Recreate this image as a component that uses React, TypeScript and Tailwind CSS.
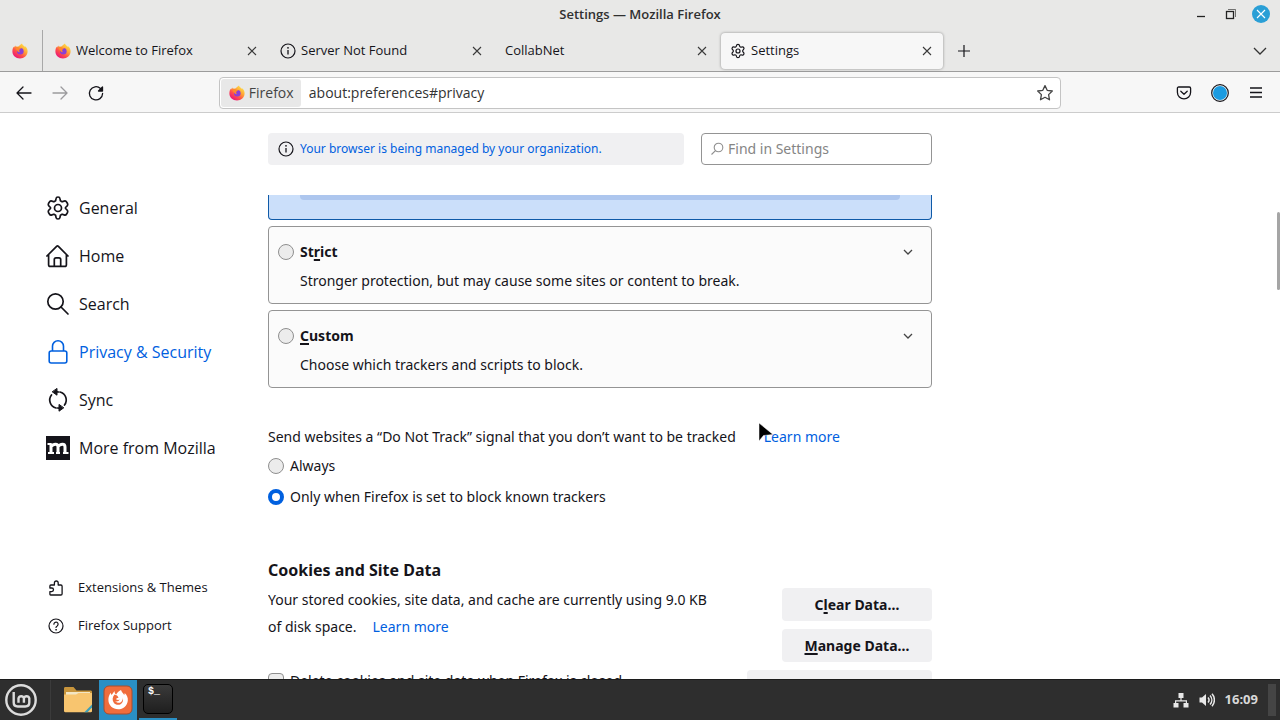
import type { ReactNode } from "react";
import { Settings } from "lucide-react";

function FirefoxLogo() {
  return (
    <svg viewBox="0 0 16 16" className="size-4 shrink-0">
      <defs>
        <linearGradient id="fx-flame" x1="0.85" y1="0.1" x2="0.2" y2="0.95">
          <stop offset="0" stopColor="#ffe14a" />
          <stop offset="0.35" stopColor="#ffa436" />
          <stop offset="0.65" stopColor="#ff4f4a" />
          <stop offset="1" stopColor="#e8127c" />
        </linearGradient>
      </defs>
      <path
        d="M10 .6c.3 1 .9 1.5 1.700 2.200.5.400.9.800 1.200 1.300.2-.3.200-.6.200-.8 1.600 1.300 2.600 3.200 2.500 5.300-.1 4-3.400 7-7.600 7S.4 12.500.4 8.600c0-1.700.3-3.500 1.300-4.900.1.400.2.700.3.900.3-.9.800-1.600 1.500-2.200 0 .5.100 1 .3 1.300.7-.2 1.500-.2 2.200.1C7 3 8.600 1.500 10 .6z"
        fill="url(#fx-flame)"
      />
      <circle cx="8.300" cy="8.300" r="3.300" fill="#8a3fd6" />
      <path d="M3.800 4.200c1.400-.5 2.800-.2 3.600.6.8.1 1.400.3 1.800.8-1 .2-1.600.7-1.900 1.400-.3.800 0 1.700.8 2.100-1.700.3-2.900-.6-3-1.800C4 6.600 3.600 5.300 3.800 4.200z" fill="#ff8a2b" />
    </svg>
  );
}

function InfoIcon() {
  return (
    <svg viewBox="0 0 16 16" className="size-4 shrink-0" fill="none" stroke="currentColor">
      <circle cx="8" cy="8" r="7" strokeWidth="1.200" />
      <path d="M8 7v4.600" strokeWidth="1.300" />
      <circle cx="8" cy="4.800" r="0.900" fill="currentColor" stroke="none" />
    </svg>
  );
}

function CloseIcon() {
  return (
    <svg viewBox="0 0 10 10" className="size-[10px]" fill="none" stroke="currentColor" strokeWidth="1.100">
      <path d="M1 1l8 8M9 1L1 9" />
    </svg>
  );
}

function Tab({ title, icon, active }: { title: string; icon?: ReactNode; active?: boolean }) {
  return (
    <div
      className={
        active
          ? "flex h-9 w-[222px] items-center gap-[5px] rounded bg-[#f7f7f7] pl-[9px] pr-[7px] shadow-[0_0_3px_rgba(0,0,0,0.4)]"
          : "flex h-9 w-[222px] items-center gap-[5px] rounded pl-[9px] pr-[7px]"
      }
    >
      {icon}
      <span className="flex-1 truncate text-[13px]">{title}</span>
      <button aria-label={`Close ${title}`} className="grid size-[18px] place-items-center text-[#3a3a3a]">
        <CloseIcon />
      </button>
    </div>
  );
}

function TitleBar() {
  return (
    <header className="grid h-7 shrink-0 grid-cols-[1fr_auto_1fr] items-center pr-[10px]">
      <span />
      <h1 className="pl-[10px] pt-[2px] text-[13px] font-semibold text-[#303030]">Settings — Mozilla Firefox</h1>
      <div className="flex items-center justify-end gap-3">
        <button aria-label="Minimize" className="grid size-[18px] place-items-center">
          <svg viewBox="0 0 18 18" className="size-[18px]" stroke="#222" strokeWidth="1.300">
            <path d="M5 11.500h8" />
          </svg>
        </button>
        <button aria-label="Restore" className="grid size-[18px] place-items-center">
          <svg viewBox="0 0 18 18" className="size-[18px]" fill="none" stroke="#222">
            <rect x="4.500" y="6.500" width="7" height="7" strokeWidth="1.300" />
            <path d="M6 4.500h7.500V12" strokeWidth="0.600" />
          </svg>
        </button>
        <button aria-label="Close window" className="grid size-[18px] place-items-center rounded-full bg-[#2a9fd6] text-white">
          <CloseIcon />
        </button>
      </div>
    </header>
  );
}

function TabStrip() {
  return (
    <div className="flex h-11 shrink-0 items-center border-b border-[#9c9c9c] pt-[2px]">
      <button aria-label="Firefox View" className="grid h-full w-[43px] place-items-center border-r border-[#a8a8a8] pr-[3px]">
        <FirefoxLogo />
      </button>
      <div className="flex gap-[3px] pl-[3px]">
        <Tab title="Welcome to Firefox" icon={<FirefoxLogo />} />
        <Tab title="Server Not Found" icon={<InfoIcon />} />
        <Tab title="CollabNet" />
        <Tab title="Settings" icon={<Settings className="size-4 shrink-0" strokeWidth={1.8} />} active />
      </div>
      <button aria-label="New tab" className="ml-3 grid size-[18px] place-items-center">
        <svg viewBox="0 0 12 12" className="size-3" stroke="currentColor" strokeWidth="1.200">
          <path d="M6 0v12M0 6h12" />
        </svg>
      </button>
      <button aria-label="List all tabs" className="ml-auto mr-3 grid h-4 w-4 place-items-center">
        <svg viewBox="0 0 14 8" className="h-2 w-[14px]" fill="none" stroke="#333" strokeWidth="1.300">
          <path d="M1 1l6 6 6-6" />
        </svg>
      </button>
    </div>
  );
}

function ToolButton({ label, dim, children }: { label: string; dim?: boolean; children: ReactNode }) {
  return (
    <button aria-label={label} className={dim ? "grid size-9 place-items-center opacity-40" : "grid size-9 place-items-center"}>
      <svg viewBox="0 0 18 18" className="size-[18px]" fill="none" stroke="currentColor" strokeWidth="1.300" strokeLinecap="round" strokeLinejoin="round">
        {children}
      </svg>
    </button>
  );
}

function NavBar() {
  return (
    <div className="flex h-[41px] shrink-0 items-center border-b border-[#ccc] bg-[#f7f7f7] px-[6px] pt-px">
      <ToolButton label="Back">
        <path d="M16 9H2.500M8 3L2 9l6 6" />
      </ToolButton>
      <ToolButton label="Forward" dim>
        <path d="M2 9h13.500M10 3l6 6-6 6" />
      </ToolButton>
      <ToolButton label="Reload">
        <path d="M15.600 9.500A6.600 6.600 0 1 1 13.500 4.500" />
        <path d="M15.500 3v4h-4z" fill="currentColor" />
      </ToolButton>
      <span className="flex-1" />
      <div className="flex h-8 flex-[8] items-center rounded border border-[#c4c4c4] bg-white p-px">
        <button className="flex h-full w-20 items-center gap-1 rounded-[3px] bg-[#e8e8e8] pl-2 text-sm text-[#444]">
          <FirefoxLogo />
          Firefox
        </button>
        <input
          aria-label="Address"
          defaultValue="about:preferences#privacy"
          className="min-w-0 flex-1 bg-transparent pl-2 text-sm text-[#333] outline-none"
        />
        <button aria-label="Bookmark this page" className="mr-[5px]">
          <svg viewBox="0 0 18 18" className="size-[18px]" fill="none" stroke="#444" strokeWidth="1.300" strokeLinejoin="round">
            <path d="M9 1.600l2.200 4.700 5.100.7-3.700 3.600.9 5.200L9 13.300l-4.500 2.500.9-5.200L1.700 7l5.100-.7z" />
          </svg>
        </button>
      </div>
      <span className="flex-1" />
      <ToolButton label="Save to Pocket">
        <path d="M3.700 3h10.600c.8 0 1.300.5 1.300 1.300v4a6.600 6.600 0 0 1-13.200 0v-4C2.400 3.500 2.900 3 3.700 3z" />
        <path d="M5.800 7.300L9 10.300l3.200-3" />
      </ToolButton>
      <ToolButton label="Account">
        <circle cx="9" cy="9" r="8.300" strokeWidth="1.200" />
        <circle cx="9" cy="9" r="7" fill="#1b9be0" stroke="none" />
      </ToolButton>
      <ToolButton label="Open menu">
        <path d="M3 4h12M3 8.500h12M3 13h12" strokeLinecap="butt" />
      </ToolButton>
    </div>
  );
}

const iconClass = "size-6 shrink-0";

const categories: { label: string; icon: ReactNode; current?: boolean }[] = [
  {
    label: "General",
    icon: (
      <svg viewBox="0 0 24 24" className={iconClass} fill="none" stroke="currentColor" strokeWidth="1.700" strokeLinejoin="round">
        <path d="M10 2.700C10.200 1.500 10.900 1 12 1s1.800.5 2 1.700l.4 2.100 1.700 1 2-.7c1.200-.4 2 0 2.500.900l.9 1.500c.5 1 .4 1.800-.5 2.600L19.500 11.500v1l1.500 1.400c.9.800 1 1.600.5 2.600l-.9 1.500c-.5.900-1.300 1.300-2.500.9l-2-.7-1.700 1-.4 2.100c-.2 1.200-.9 1.700-2 1.700s-1.800-.5-2-1.700l-.4-2.100-1.700-1-2 .7c-1.200.4-2 0-2.500-.9l-.9-1.500c-.5-1-.4-1.800.5-2.600l1.500-1.400v-1L3 10.100c-.9-.8-1-1.600-.5-2.600L3.400 6c.5-.9 1.300-1.300 2.500-.9l2 .7 1.700-1z" />
        <circle cx="12" cy="12" r="3.500" />
      </svg>
    ),
  },
  {
    label: "Home",
    icon: (
      <svg viewBox="0 0 24 24" className={iconClass} fill="none" stroke="currentColor" strokeWidth="1.700" strokeLinejoin="round" strokeLinecap="round">
        <path d="M.9 12L10.600 2.300a1.300 1.300 0 0 1 1.800 0L22 12M2.600 10.500v10.200c0 1 .7 1.700 1.700 1.700h14.400c1 0 1.700-.7 1.700-1.700V10.500" />
        <path d="M8.300 22v-6.500c0-1 .7-1.700 1.700-1.700h3c1 0 1.700.7 1.700 1.700V22" />
      </svg>
    ),
  },
  {
    label: "Search",
    icon: (
      <svg viewBox="0 0 24 24" className={iconClass} fill="none" stroke="currentColor" strokeWidth="1.700" strokeLinecap="round">
        <circle cx="9.500" cy="9.500" r="7.700" />
        <path d="M15 15l7 7" />
      </svg>
    ),
  },
  {
    label: "Privacy & Security",
    current: true,
    icon: (
      <svg viewBox="0 0 24 24" className={iconClass} fill="none" stroke="currentColor" strokeWidth="1.600">
        <rect x="3.200" y="11" width="17.600" height="12" rx="2" />
        <path d="M6.500 11V6.300a5.500 5.500 0 0 1 11 0V11" />
      </svg>
    ),
  },
  {
    label: "Sync",
    icon: (
      <svg viewBox="0 0 24 24" className={iconClass} fill="none" stroke="currentColor" strokeWidth="1.700" strokeLinecap="round">
        <path d="M10 20a8.200 8.200 0 0 1-4.500-13M14 4a8.200 8.200 0 0 1 4.500 13" />
        <path d="M9.500 4a8.200 8.200 0 0 1 3 0M14.500 20a8.200 8.200 0 0 1-3 0" />
        <path d="M11 .8v6.400L6.500 4zM13 16.800v6.400l4.500-3.200z" fill="currentColor" strokeWidth="1" strokeLinejoin="round" />
      </svg>
    ),
  },
  {
    label: "More from Mozilla",
    icon: (
      <span className="grid size-6 shrink-0 place-items-center bg-[#15141a]">
        <svg viewBox="0 0 24 24" className={iconClass} fill="none" stroke="#fff">
          <path d="M5 7.500V17M12 17v-6c0-2-1-2.800-2.500-2.800S5.500 9.500 5.500 11M19 17v-6c0-2-1-2.800-2.500-2.800S12.300 9.500 12.300 11" strokeWidth="3" />
          <path d="M1.500 8h4M2 17h6M10 17h4M17 17h5.500" strokeWidth="2.200" />
        </svg>
      </span>
    ),
  },
];

function Sidebar() {
  return (
    <nav className="flex w-[268px] shrink-0 flex-col pb-[34px] pl-[46px] pt-[71px]">
      {categories.map((c) => (
        <a
          key={c.label}
          href="#"
          className={c.current ? "flex h-12 items-center gap-[9px] text-[#0060df]" : "flex h-12 items-center gap-[9px]"}
        >
          {c.icon}
          {c.label}
        </a>
      ))}
      <div className="mt-auto text-[13px]">
        <a href="#" className="flex h-[38px] items-center gap-[14px] pl-[2px]">
          <svg viewBox="0 0 16 16" className="size-4" fill="none" stroke="currentColor" strokeWidth="1.300" strokeLinejoin="round">
            <path d="M2.600 15h10.300c.7 0 1.200-.5 1.200-1.200V6.200c0-.7-.5-1.200-1.200-1.200h-2.700V2.900a1.900 1.900 0 0 0-3.800 0V5H2.900c-.6 0-1 .4-1 1v2h1.800a1.800 1.800 0 0 1 0 3.600H1.900v2.600c0 .5.300.8.7.8z" />
          </svg>
          Extensions &amp; Themes
        </a>
        <a href="#" className="flex h-[38px] items-center gap-[14px] pl-[2px]">
          <svg viewBox="0 0 16 16" className="size-4" fill="none" stroke="currentColor" strokeWidth="1.200" strokeLinecap="round">
            <circle cx="8" cy="8" r="7" />
            <path d="M5.900 6.200a2.100 2.100 0 1 1 3.300 1.700C8.400 8.400 8 8.700 8 9.500" />
            <circle cx="8" cy="11.800" r="0.500" fill="currentColor" strokeWidth="0.600" />
          </svg>
          Firefox Support
        </a>
      </div>
    </nav>
  );
}

function Radio({ name, id, checked }: { name: string; id: string; checked?: boolean }) {
  return (
    <input
      type="radio"
      id={id}
      name={name}
      defaultChecked={checked}
      className="size-4 shrink-0 appearance-none rounded-full border border-[#8f8f8f] bg-[#ececec] checked:border-4 checked:border-[#0060df] checked:bg-white"
    />
  );
}

function ProtectionCard({ id, title, text }: { id: string; title: ReactNode; text: string }) {
  return (
    <div className="mt-[6px] rounded border border-[#949494] bg-[#fbfbfb] pb-[10px] pl-[9px] pr-[17px] pt-[13px]">
      <div className="flex h-6 items-center gap-[6px]">
        <Radio name="protection" id={id} />
        <label htmlFor={id} className="flex-1 font-bold">
          {title}
        </label>
        <button aria-label="Expand section" className="grid size-3 place-items-center">
          <svg viewBox="0 0 10 6" className="h-[6px] w-[10px]" fill="none" stroke="#444" strokeWidth="1.300">
            <path d="M1 1l4 4 4-4" />
          </svg>
        </button>
      </div>
      <p className="mt-[5px] pl-[22px] leading-6">{text}</p>
    </div>
  );
}

function Preferences() {
  return (
    <main className="flex w-[664px] flex-col font-['Noto_Sans','Open_Sans',sans-serif] text-sm">
      <div className="flex h-[82px] shrink-0 items-start gap-[17px] pt-5">
        <div className="flex h-8 flex-1 items-center gap-[6px] rounded-sm bg-[#f0f0f2] pl-[10px] text-xs">
          <InfoIcon />
          <a href="#" className="text-[#0060df]">
            Your browser is being managed by your organization.
          </a>
        </div>
        <label className="flex h-8 w-[231px] items-center gap-1 rounded border border-[#949494] px-2">
          <svg viewBox="0 0 14 14" className="size-[14px] shrink-0" fill="none" stroke="#8f8f8f" strokeWidth="1.100">
            <circle cx="8.500" cy="5.500" r="4.300" />
            <path d="M5.500 8.700L1.500 12.500" />
          </svg>
          <input aria-label="Find in Settings" placeholder="Find in Settings" className="min-w-0 flex-1 outline-none placeholder:text-[#858585]" />
        </label>
      </div>

      <div className="min-h-0 flex-1 overflow-hidden">
        <div className="h-[25px] rounded-b border border-t-0 border-[#0f5aa8] bg-[#cbdffa] px-[31px]">
          <div className="h-[5px] rounded-b-sm bg-[#adc6ee]" />
        </div>
        <ProtectionCard
          id="strict"
          title={<>St<u className="decoration-2 underline-offset-2">r</u>ict</>}
          text="Stronger protection, but may cause some sites or content to break."
        />
        <ProtectionCard
          id="custom"
          title={<><u className="decoration-2 underline-offset-2">C</u>ustom</>}
          text="Choose which trackers and scripts to block."
        />

        <fieldset className="mt-9">
          <legend className="w-full leading-[26px]">
            Send websites a “Do Not Track” signal that you don’t want to be tracked
            <a href="#" className="ml-7 text-[#0060df]">Learn more</a>
          </legend>
          <div className="flex h-[31px] items-center gap-[6px]">
            <Radio name="dnt" id="dnt-always" />
            <label htmlFor="dnt-always">Always</label>
          </div>
          <div className="flex h-[31px] items-center gap-[6px]">
            <Radio name="dnt" id="dnt-trackers" checked />
            <label htmlFor="dnt-trackers">Only when Firefox is set to block known trackers</label>
          </div>
        </fieldset>

        <section className="mt-[46px]">
          <h2 className="text-base font-bold leading-6">Cookies and Site Data</h2>
          <div className="flex justify-between pt-1">
            <div>
              <p className="leading-[27px]">Your stored cookies, site data, and cache are currently using 9.0 KB</p>
              <p className="leading-[27px]">
                of disk space.
                <a href="#" className="ml-4 text-[#0060df]">Learn more</a>
              </p>
              <div className="mt-[27px] flex h-[27px] items-center gap-[6px]">
                <input type="checkbox" id="delete-cookies" className="size-4 appearance-none rounded-sm border border-[#8f8f8f] bg-[#ececec]" />
                <label htmlFor="delete-cookies">Delete cookies and site data when Firefox is closed</label>
              </div>
            </div>
            <div className="-ml-9 flex flex-col items-end gap-2 pt-[2px] font-bold">
              <button className="h-[33px] w-[150px] rounded-sm bg-[#f0f0f2]">
                C<u className="decoration-2 underline-offset-2">l</u>ear Data…
              </button>
              <button className="h-[33px] w-[150px] rounded-sm bg-[#f0f0f2]">
                <u className="decoration-2 underline-offset-2">M</u>anage Data…
              </button>
              <button aria-label="Manage exceptions" className="h-[33px] w-[185px] rounded-sm bg-[#f0f0f2]" />
            </div>
          </div>
        </section>
      </div>
    </main>
  );
}

function Taskbar() {
  return (
    <footer className="flex h-[41px] shrink-0 items-center border-t border-[#1c1c1c] bg-[#2e2e2e]">
      <button aria-label="Menu" className="grid h-full w-[51px] place-items-center border-r border-[#3b3b3b] pr-[9px]">
        <svg viewBox="0 0 32 32" className="size-8" fill="none" stroke="#dcdcdc">
          <circle cx="16" cy="16" r="14.700" strokeWidth="2.400" />
          <path d="M8.700 8v10.500c0 2.500 1.500 4 4 4h7.600c2.500 0 4-1.500 4-4v-4.200a2.800 2.800 0 0 0-5.400 0v4.500M18.900 14.300a2.800 2.800 0 0 0-5.400 0v4.500" strokeWidth="2.400" />
        </svg>
      </button>
      <button aria-label="Files" className="ml-[7px] mr-px grid h-full w-10 place-items-center">
        <svg viewBox="0 0 30 28" className="h-7 w-[30px]">
          <path d="M1 2.500C1 1.500 1.500 1 2.500 1h8l3 3.500h14c1 0 1.500.5 1.500 1.500v8H1z" fill="#c8953c" />
          <rect x="3" y="6" width="24" height="6" fill="#f3e6c4" />
          <path d="M1 8.500h12l2.500-1.500H29v18c0 .8-.5 1.200-1.200 1.200H2.200C1.500 26.200 1 25.800 1 25z" fill="#f8c56f" />
          <path d="M29 18.500v3l-4.500 4.700h-3.200z" fill="#3f9fb8" />
        </svg>
      </button>
      <button aria-label="Firefox" className="grid h-full w-[38px] place-items-center bg-[#2a8fc4]">
        <svg viewBox="0 0 30 30" className="size-[30px]">
          <rect x="1" y="1" width="28" height="28" rx="5" fill="#f06d3c" stroke="#a84c2c" />
          <path d="M18 5c.7 2.500 2.300 3 3.200 5 .5-.7.5-1.300.4-2 2.300 2 3.600 4.600 3.200 7.700-.6 5-4.700 8.600-9.700 8.600-5.200 0-9.600-4-9.700-9.300 0-2.500.6-5 2.300-7.200.2.900.5 1.600.9 2.200L11.500 6c0 1.600.5 2.900 1.700 3.500 1.100-2.400 3-3.500 4.800-4.500z" fill="#fff" />
          <path d="M11.500 9.500c2 .4 3.400 1.500 4 3.200-1.400.2-2.300.8-2.400 1.500 1 .9 2.400.9 3.600.4-.8 1.600-2.500 2.300-4.500 1.700 1.600 1.700 4.200 2 6 .6 1.500-1.200 1.900-2.900 1.300-4.600 1.200 2.500.6 5.300-1.500 6.600-2.400 1.500-5.500 1-7.200-1.200-1.800-2.300-1.500-5.700.7-8.200z" fill="#f06d3c" />
        </svg>
      </button>
      <button aria-label="Terminal" className="ml-[2px] grid h-full w-[38px] place-items-center border-b-2 border-[#2a8fc4]">
        <span className="block size-[30px] rounded-[5px] border border-black bg-linear-to-b from-[#3a3a3a] to-[#1f1f1f] pl-1 pt-px text-left font-['Liberation_Mono',monospace] text-[10px] font-bold leading-3 text-white">
          $_
        </span>
      </button>
      <div className="ml-auto flex h-full items-center pr-1 text-[#e8e8e8]">
        <svg viewBox="0 0 16 16" className="size-4" fill="currentColor">
          <path d="M5.500 1h5v5H8.600v2.200H14V11h1.500v4.500h-5V11h2.300V9.400H3.200V11h2.300v4.500h-5V11H2V8.200h5.400V6H5.500z" />
        </svg>
        <svg viewBox="0 0 16 16" className="ml-[10px] size-4" fill="none" stroke="currentColor" strokeWidth="1.500">
          <path d="M.5 5.500h2.500L7 2v12l-4-3.500H.500z" fill="currentColor" stroke="none" />
          <path d="M9 5.500c1.300 1.500 1.300 3.500 0 5M11 3.500c2.400 2.600 2.400 6.400 0 9M13 1.800c3.200 3.600 3.200 8.800 0 12.400" />
        </svg>
        <time className="ml-[10px] text-[13px] font-bold text-[#d8d8d8]">16:09</time>
        <span className="ml-[10px] h-8 w-2 bg-[#454545]" />
      </div>
    </footer>
  );
}

export default function App() {
  return (
    <div className="flex h-screen flex-col overflow-hidden bg-[#e8e8e7] font-['Open_Sans','Noto_Sans',sans-serif] text-[#15141a]">
      <TitleBar />
      <TabStrip />
      <NavBar />
      <div className="relative flex min-h-0 flex-1 bg-white">
        <Sidebar />
        <Preferences />
        <div className="absolute right-0 top-[99px] h-[78px] w-[3px] rounded-full bg-[#a5a5a5]" />
      </div>
      <Taskbar />
      <svg viewBox="0 0 16 20" className="pointer-events-none absolute left-[758px] top-[422px] h-5 w-4">
        <path d="M1 1v18l4.500-5.500L15 12.500z" fill="#000" stroke="#fff" strokeWidth="0.500" />
      </svg>
    </div>
  );
}
